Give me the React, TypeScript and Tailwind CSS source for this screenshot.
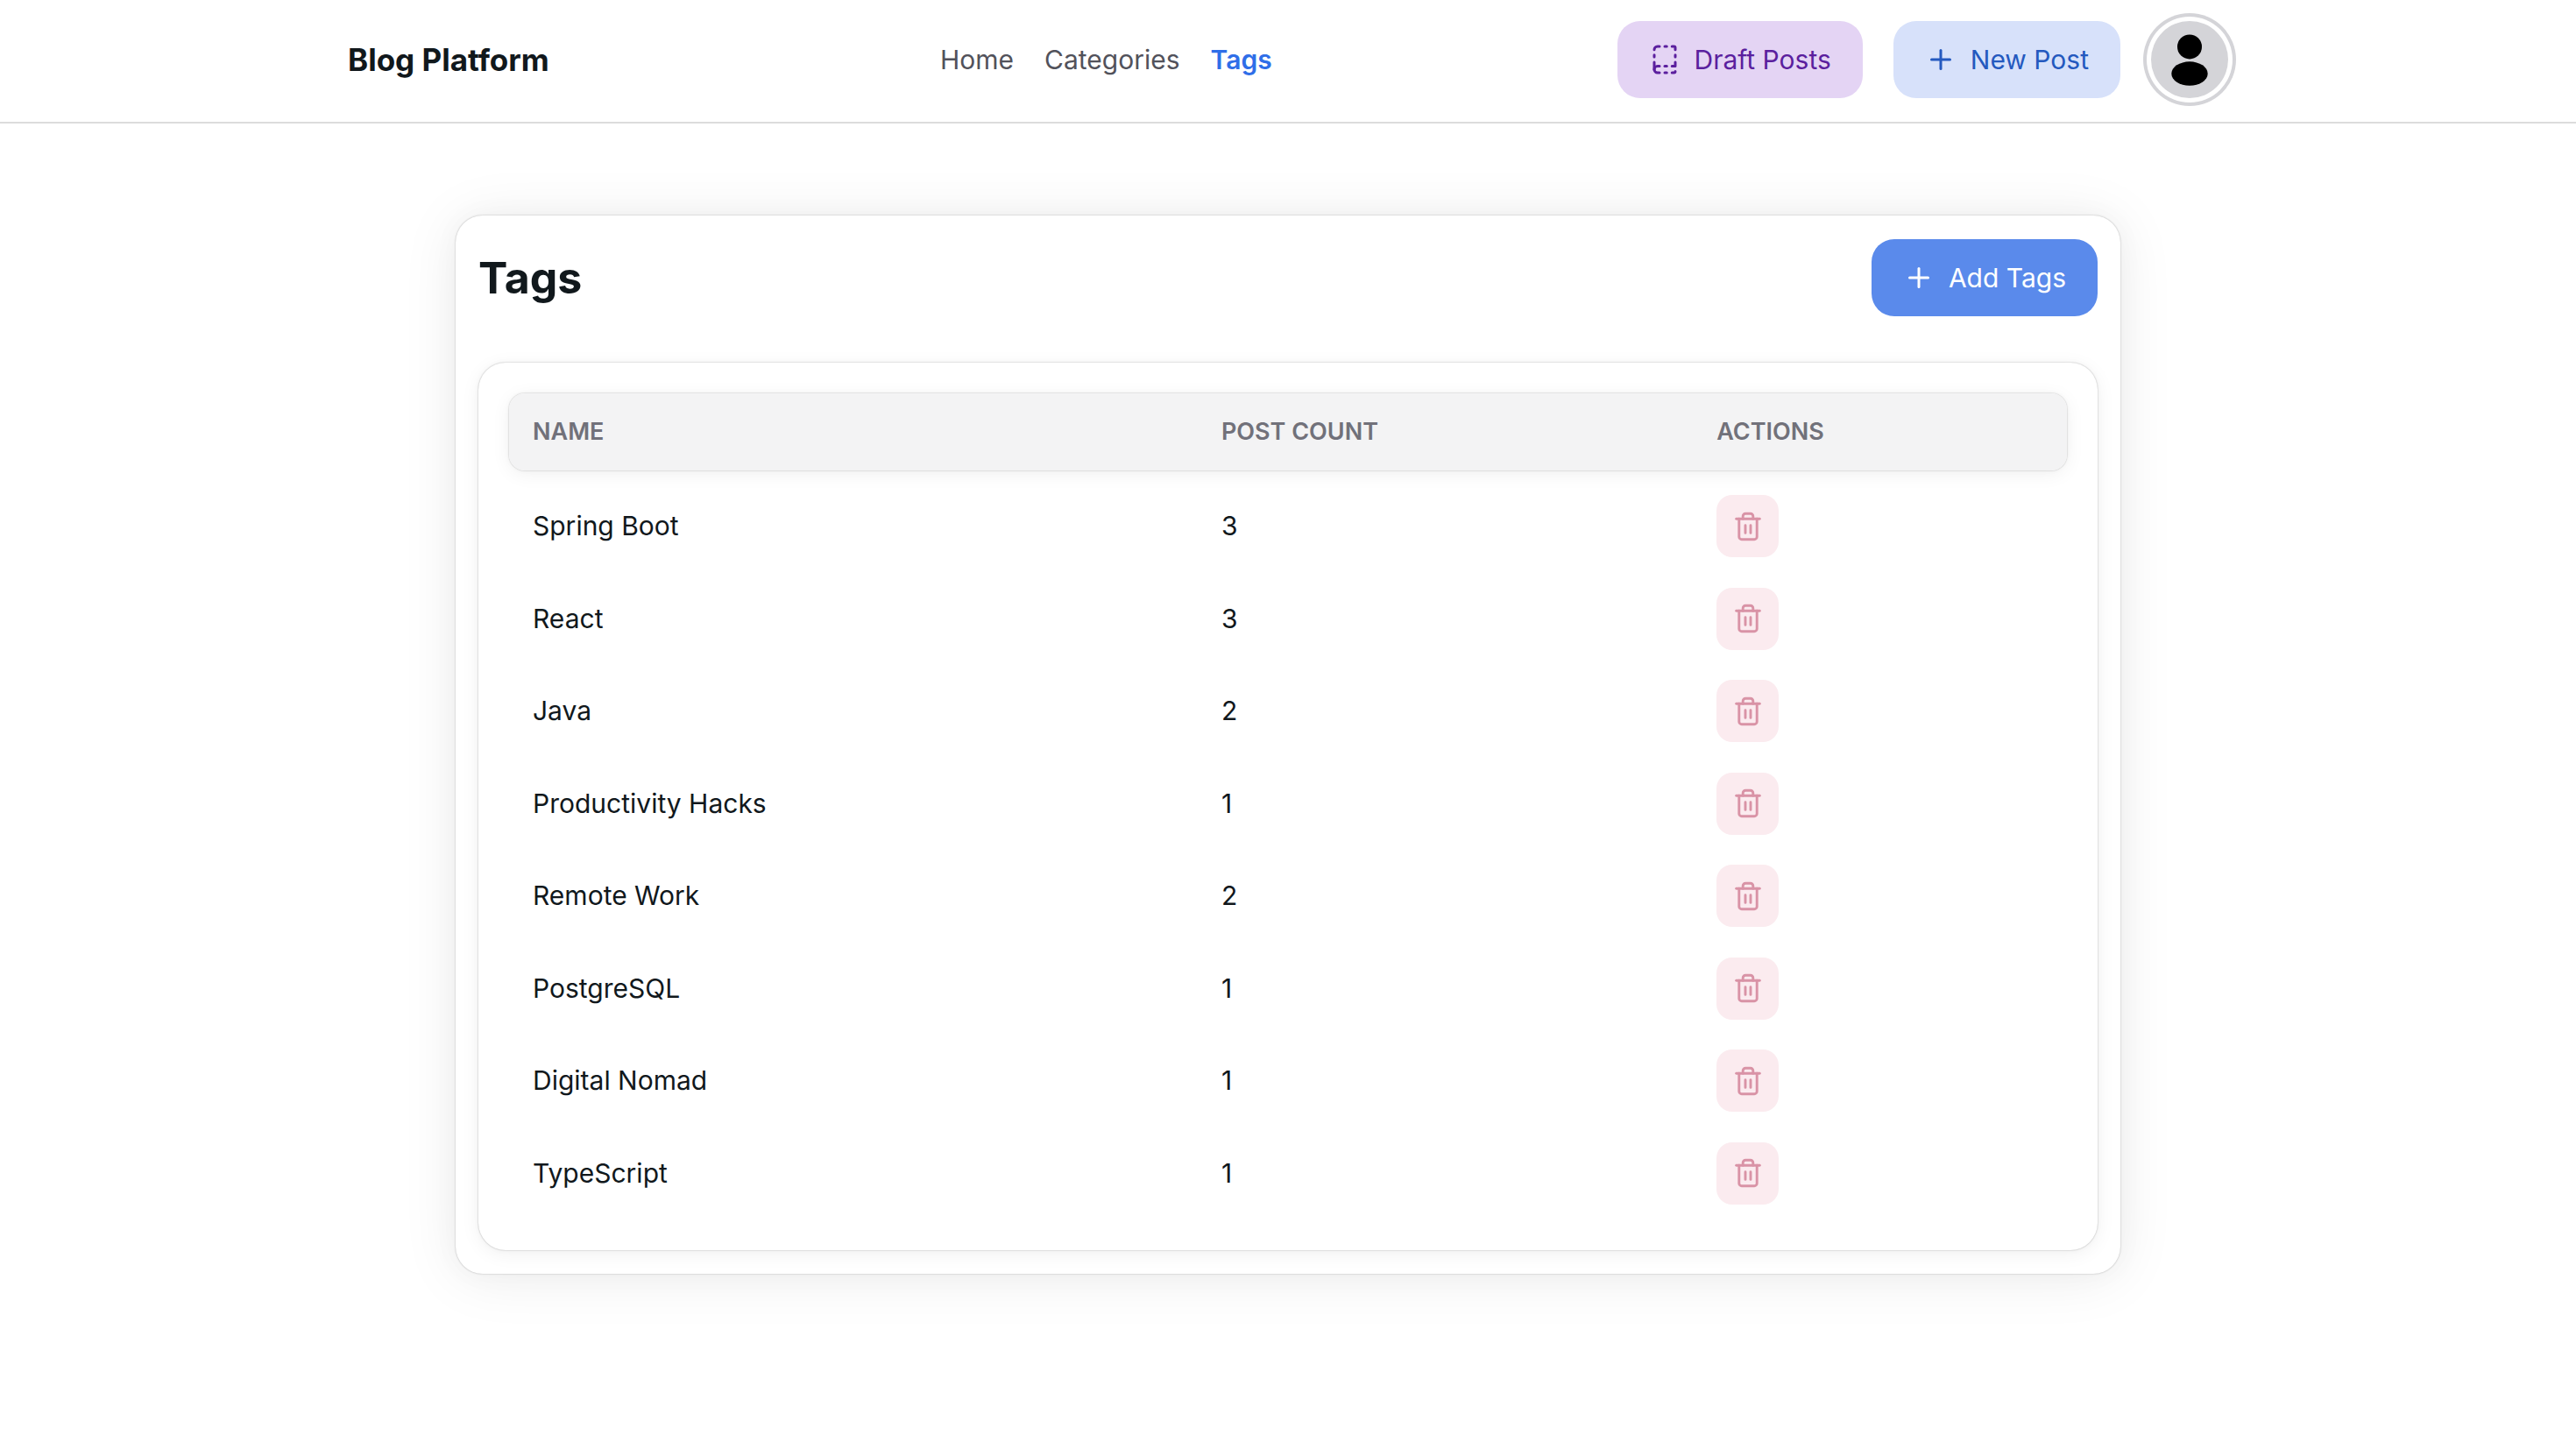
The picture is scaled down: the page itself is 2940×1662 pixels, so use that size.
import { BookDashed, Plus } from "lucide-react";

type Tag = { name: string; posts: number };

const tags: Tag[] = [
  { name: "Spring Boot", posts: 3 },
  { name: "React", posts: 3 },
  { name: "Java", posts: 2 },
  { name: "Productivity Hacks", posts: 1 },
  { name: "Remote Work", posts: 2 },
  { name: "PostgreSQL", posts: 1 },
  { name: "Digital Nomad", posts: 1 },
  { name: "TypeScript", posts: 1 },
];

const button = "flex h-22 items-center gap-4 rounded-[26px] px-9 text-[30px]";

function TrashIcon() {
  return (
    <svg
      viewBox="0 0 36 36"
      className="size-9"
      fill="none"
      stroke="currentColor"
      strokeWidth="2.9"
      strokeLinecap="round"
      strokeLinejoin="round"
      aria-hidden="true"
    >
      <path d="M4.7 9.3h26.6" />
      <path d="M12.2 9.3V6.2a3 3 0 0 1 3-3h5.6a3 3 0 0 1 3 3v3.1" />
      <path d="M7.8 9.3v20.4a3 3 0 0 0 3 3h14.4a3 3 0 0 0 3-3V9.3" />
      <path d="M15 16.8v8.6M21 16.8v8.6" />
    </svg>
  );
}

function Avatar() {
  return (
    <button
      type="button"
      aria-label="Account"
      className="ml-[35px] flex size-22 items-center justify-center rounded-full bg-[#d4d4d8] ring-4 ring-[#d4d4d8] ring-offset-5 ring-offset-white"
    >
      <svg viewBox="0 0 24 24" className="size-[70px]" aria-hidden="true">
        <circle cx="12" cy="7" r="4.8" />
        <ellipse cx="12" cy="17.5" rx="7.1" ry="4.7" />
      </svg>
    </button>
  );
}

function Navbar() {
  return (
    <header className="border-b-2 border-[#dcdcdc] pb-[3px]">
      <div className="mx-auto flex h-[136px] max-w-[2146px] items-center">
        <div className="w-[31.5%]">
          <a href="#" className="text-[35px] font-bold">
            Blog Platform
          </a>
        </div>
        <nav className="flex gap-[35px] text-[30px] text-[#52525b]">
          <a href="#">Home</a>
          <a href="#">Categories</a>
          <a href="#" aria-current="page" className="font-semibold text-[#2f6ee8]">
            Tags
          </a>
        </nav>
        <div className="ml-auto flex items-center">
          <button type="button" className={`${button} mr-[35px] bg-[#e4d4f4] text-[#5b1f9e]`}>
            <BookDashed size={36} />
            Draft Posts
          </button>
          <button type="button" className={`${button} bg-[#d7e1fa] text-[#2459bf]`}>
            <Plus size={36} />
            New Post
          </button>
          <Avatar />
        </div>
      </div>
    </header>
  );
}

function TagTable() {
  return (
    <div className="rounded-[31px] bg-white p-[35px] shadow-[0_0_11px_rgb(0_0_0/0.02),0_4px_22px_rgb(0_0_0/0.06),0_0_2px_rgb(0_0_0/0.3)]">
      <table className="w-full table-fixed text-left">
        <colgroup>
          <col className="w-[44.2%]" />
          <col className="w-[31.8%]" />
          <col className="w-[24%]" />
        </colgroup>
        <thead>
          <tr className="h-22 rounded-[18px] text-[27px] text-[#71717a] shadow-[0_0_11px_rgb(0_0_0/0.02),0_4px_22px_rgb(0_0_0/0.06),0_0_2px_rgb(0_0_0/0.3)]">
            <th className="rounded-l-[18px] bg-[#f3f3f4] px-[27px] font-semibold">NAME</th>
            <th className="bg-[#f3f3f4] px-[27px] font-semibold">POST COUNT</th>
            <th className="rounded-r-[18px] bg-[#f3f3f4] px-[27px] font-semibold">ACTIONS</th>
          </tr>
        </thead>
        <tbody className="before:block before:h-[11px]">
          {tags.map((tag) => (
            <tr key={tag.name} className="h-[105px] text-[30px] even:h-[106px]">
              <td className="px-[27px]">{tag.name}</td>
              <td className="px-[27px]">{tag.posts}</td>
              <td className="px-[27px]">
                <button
                  type="button"
                  aria-label={`Delete ${tag.name}`}
                  className="flex size-[71px] items-center justify-center rounded-[18px] bg-[#fbebef] text-[#d993a6]"
                >
                  <TrashIcon />
                </button>
              </td>
            </tr>
          ))}
        </tbody>
      </table>
    </div>
  );
}

export default function App() {
  return (
    <div className="min-h-screen bg-white font-['Inter',sans-serif] text-[#11181c]">
      <Navbar />
      <main className="mx-auto mt-[105px] max-w-[1900px] rounded-[31px] bg-white px-[26px] py-[27px] shadow-[0_0_33px_rgb(0_0_0/0.03),0_4px_66px_rgb(0_0_0/0.08),0_0_2px_rgb(0_0_0/0.3)]">
        <div className="mb-[53px] flex items-center justify-between">
          <h1 className="text-[50px] font-bold">Tags</h1>
          <button type="button" className={`${button} bg-[#5a8aeb] text-white`}>
            <Plus size={36} />
            Add Tags
          </button>
        </div>
        <TagTable />
      </main>
    </div>
  );
}
